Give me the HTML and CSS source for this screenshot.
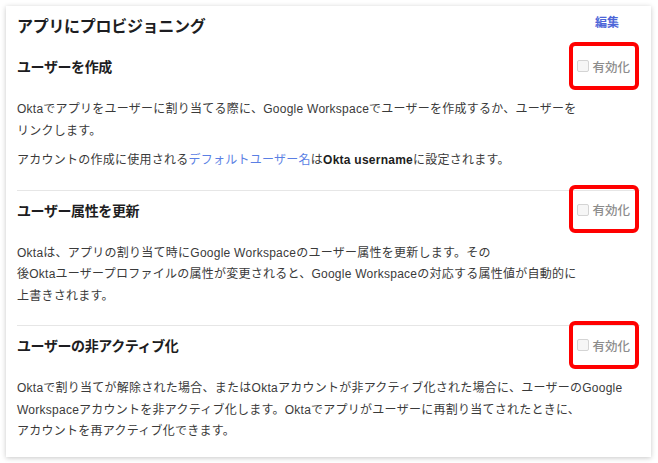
FILE: index.html
```html
<!DOCTYPE html>
<html lang="ja">
<head>
    <meta charset="UTF-8">
    <meta name="viewport" content="width=device-width, initial-scale=1.0">
    <title>アプリにプロビジョニング</title>
    <link rel="stylesheet" href="styles.css">
</head>
<body>
    <main class="card">
        <header class="card-header">
            <h1>アプリにプロビジョニング</h1>
            <a href="#" class="edit-link">編集</a>
        </header>

        <section class="setting">
            <div class="setting-head">
                <h2>ユーザーを作成</h2>
                <label class="toggle">
                    <input type="checkbox" disabled>
                    <span>有効化</span>
                </label>
            </div>
            <p>Oktaでアプリをユーザーに割り当てる際に、Google Workspaceでユーザーを作成するか、ユーザーを<br>リンクします。</p>
            <p>アカウントの作成に使用される<a href="#">デフォルトユーザー名</a>は<strong>Okta username</strong>に設定されます。</p>
        </section>

        <section class="setting">
            <div class="setting-head">
                <h2>ユーザー属性を更新</h2>
                <label class="toggle">
                    <input type="checkbox" disabled>
                    <span>有効化</span>
                </label>
            </div>
            <p>Oktaは、アプリの割り当て時にGoogle Workspaceのユーザー属性を更新します。その<br>後Oktaユーザープロファイルの属性が変更されると、Google Workspaceの対応する属性値が自動的に<br>上書きされます。</p>
        </section>

        <section class="setting">
            <div class="setting-head">
                <h2>ユーザーの非アクティブ化</h2>
                <label class="toggle">
                    <input type="checkbox" disabled>
                    <span>有効化</span>
                </label>
            </div>
            <p>Oktaで割り当てが解除された場合、またはOktaアカウントが非アクティブ化された場合に、ユーザーのGoogle<br>Workspaceアカウントを非アクティブ化します。Oktaでアプリがユーザーに再割り当てされたときに、<br>アカウントを再アクティブ化できます。</p>
        </section>
    </main>
</body>
</html>
```

FILE: styles.css
```css
:root {
    --text-dark: #1d1d21;
    --text-body: #3a3a3a;
    --text-muted: #8c8c8c;
    --link: #5b7fe4;
    --edit: #4d66d8;
    --divider: #e6e6e6;
    --highlight: #ff0000;
}

* {
    margin: 0;
    padding: 0;
    box-sizing: border-box;
}

body {
    font-family: "Liberation Sans", "Noto Sans CJK JP", sans-serif;
    background: #ffffff;
    color: var(--text-body);
    padding: 6px 7px 6px 6px;
}

.card {
    background: #ffffff;
    box-shadow: 0 1px 5px rgba(0, 0, 0, 0.22);
    padding: 8px 11px 12px;
    height: 451px;
}

.card-header {
    display: flex;
    justify-content: space-between;
    align-items: center;
    height: 22px;
    margin-bottom: 11px;
}

.card-header h1 {
    font-size: 16px;
    font-weight: 700;
    color: var(--text-dark);
    letter-spacing: -0.3px;
}

.edit-link {
    font-size: 12px;
    font-weight: 700;
    color: var(--edit);
    text-decoration: none;
    margin-right: 21px;
    margin-top: -8px;
}

.setting {
    padding: 9px 0 10px;
    border-bottom: 1px solid var(--divider);
}

.setting:last-child {
    border-bottom: none;
}

.setting-head {
    display: flex;
    justify-content: space-between;
    align-items: center;
    height: 20px;
    margin-bottom: 23px;
}

.setting-head h2 {
    font-size: 14px;
    font-weight: 700;
    color: var(--text-dark);
    letter-spacing: -0.4px;
}

.toggle {
    position: relative;
    display: flex;
    align-items: center;
    gap: 3px;
    margin-right: 10px;
    font-size: 12.5px;
    font-weight: 500;
    color: var(--text-muted);
}

.toggle input {
    appearance: none;
    width: 12px;
    height: 12px;
    border: 1px solid #d4d4d4;
    border-radius: 2px;
    background: #f6f6f6;
}

/* annotation frame drawn over the toggle */
.toggle::after {
    content: "";
    position: absolute;
    left: -8px;
    right: -9px;
    top: -15px;
    bottom: -14px;
    border: 4px solid var(--highlight);
    border-radius: 6px;
}

.setting p {
    font-size: 12px;
    line-height: 21.5px;
    letter-spacing: 0.25px;
    margin-bottom: 8px;
}

.setting p a {
    color: var(--link);
    text-decoration: none;
}

.setting p strong {
    color: var(--text-dark);
    font-weight: 700;
}
```
